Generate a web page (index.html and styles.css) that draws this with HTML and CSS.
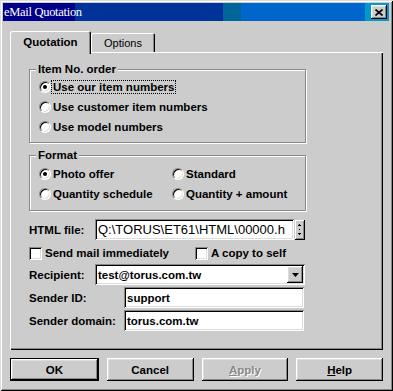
FILE: index.html
```html
<!DOCTYPE html>
<html lang="en">
<head>
  <meta charset="UTF-8" />
  <title>eMail Quotation</title>
  <link rel="stylesheet" href="styles.css">
</head>
<body>
  <div class="window">
    <div class="titlebar">
      <span class="title">eMail Quotation</span>
      <div class="close">
        <svg width="8" height="7" viewBox="0 0 8 7"><path d="M0.5 0.5 L7.5 6.5 M7.5 0.5 L0.5 6.5" stroke="#000" stroke-width="1.7" fill="none"/></svg>
      </div>
    </div>

    <div class="body">
      <div class="tabs">
        <div class="tab active">Quotation</div>
        <div class="tab">Options</div>
      </div>

      <div class="panel">
        <div class="group group-order">
          <div class="legend">Item No. order</div>
          <div class="opt"><span class="radio on"></span><span class="label focus">Use our item numbers</span></div>
          <div class="opt"><span class="radio"></span><span class="label">Use customer item numbers</span></div>
          <div class="opt"><span class="radio"></span><span class="label">Use model numbers</span></div>
        </div>

        <div class="group group-format">
          <div class="legend">Format</div>
          <div class="grid">
            <div class="opt"><span class="radio on"></span><span class="label">Photo offer</span></div>
            <div class="opt"><span class="radio"></span><span class="label">Standard</span></div>
            <div class="opt"><span class="radio"></span><span class="label">Quantity schedule</span></div>
            <div class="opt"><span class="radio"></span><span class="label">Quantity + amount</span></div>
          </div>
        </div>

        <div class="row row-file">
          <span class="caption">HTML file:</span>
          <div class="field file">Q:\TORUS\ET61\HTML\00000.h</div>
          <div class="spin">
            <svg width="6" height="20" viewBox="0 0 6 20" shape-rendering="crispEdges">
              <rect x="2" y="4" width="1" height="1"/><rect x="1" y="5" width="3" height="1"/>
              <rect x="2" y="9" width="1" height="1"/>
              <rect x="1" y="13" width="3" height="1"/><rect x="2" y="14" width="1" height="1"/>
            </svg>
          </div>
        </div>

        <div class="row row-checks">
          <div class="check-item first"><span class="check"></span>Send mail immediately</div>
          <div class="check-item"><span class="check"></span>A copy to self</div>
        </div>

        <div class="row row-combo">
          <span class="caption">Recipient:</span>
          <div class="field combo">
            <span class="combo-text">test@torus.com.tw</span>
            <span class="drop">
              <svg width="7" height="4" viewBox="0 0 7 4"><polygon points="0,0 7,0 3.5,4" fill="#000"/></svg>
            </span>
          </div>
        </div>

        <div class="row row-sender">
          <span class="caption wide">Sender ID:</span>
          <div class="field sender">support</div>
        </div>

        <div class="row row-sender">
          <span class="caption wide">Sender domain:</span>
          <div class="field sender">torus.com.tw</div>
        </div>
      </div>

      <div class="buttons">
        <div class="btn default">OK</div>
        <div class="btn">Cancel</div>
        <div class="btn disabled"><u>A</u>pply</div>
        <div class="btn"><u>H</u>elp</div>
      </div>
    </div>
  </div>
</body>
</html>
```

FILE: styles.css
```css
* {
  box-sizing: border-box;
}

body {
  margin: 0;
  background: #fff;
  font-family: "Liberation Sans", Arial, sans-serif;
  font-size: 11.5px;
  font-weight: bold;
  color: #000;
}

.window {
  width: 393px;
  height: 391px;
  display: flex;
  flex-direction: column;
  padding: 3px 4px 3px 3px;
  background: #cccccc;
  box-shadow: inset 1px 1px #dddddd, inset -1px -1px #000, inset 2px 2px #fff, inset -2px -2px #888;
}

.titlebar {
  height: 18px;
  display: flex;
  align-items: center;
  justify-content: space-between;
  padding: 0 2px 0 1px;
  background: linear-gradient(to right, #000088 0 18.7%, #003399 18.7% 57%, #006699 57% 61.7%, #0066cc 61.7% 93.8%, #0099cc 93.8%);
}

.title {
  font-family: "Liberation Serif", "Times New Roman", serif;
  font-weight: normal;
  font-size: 12.5px;
  letter-spacing: -0.3px;
  line-height: 18px;
  color: #fff;
}

.close {
  width: 16px;
  height: 14px;
  display: flex;
  align-items: center;
  justify-content: center;
  background: #cccccc;
  box-shadow: inset -1px -1px #000, inset 1px 1px #fff, inset -2px -2px #888, inset 2px 2px #dddddd;
}

.body {
  flex: 1;
  display: flex;
  flex-direction: column;
  padding: 10px 6px 7px 7px;
}

/* tabs */
.tabs {
  height: 21px;
  display: flex;
  align-items: flex-end;
}

.tab {
  position: relative;
  height: 19px;
  display: flex;
  align-items: center;
  justify-content: center;
  font-weight: normal;
  font-size: 11px;
  border-radius: 2px 2px 0 0;
  box-shadow: inset 1px 1px #fff, inset -1px 0 #000, inset -2px 0 #888;
}

.tab.active {
  z-index: 1;
  width: 81px;
  height: 23px;
  margin-bottom: -2px;
  padding-bottom: 2px;
  background: #cccccc;
  font-weight: bold;
  font-size: 11.5px;
}

.tab:not(.active) {
  width: 64px;
}

.panel {
  flex: 1;
  padding: 17px 0 0 19px;
  box-shadow: inset 1px 1px #fff, inset -1px -1px #000, inset -2px -2px #888;
}

/* group boxes */
.group {
  width: 277px;
  border: 1px solid #888;
  box-shadow: inset 1px 1px #fff, 1px 1px #fff;
  padding: 0 4px 5px 9px;
}

.legend {
  width: fit-content;
  margin: -8px 0 1px -3px;
  padding: 0 2px;
  line-height: 14px;
  background: #cccccc;
}

.group-format {
  margin-top: 12px;
  padding-bottom: 6px;
}

.group-format .legend {
  margin-bottom: 2px;
}

.grid {
  display: grid;
  grid-template-columns: 133px 1fr;
}

.opt {
  height: 20px;
  display: flex;
  align-items: center;
}

.radio {
  position: relative;
  width: 12px;
  height: 12px;
  flex: none;
  border-radius: 50%;
  background: #fff;
  border: 1px solid;
  border-color: #888 #fff #fff #888;
  box-shadow: inset 1px 1px #000, inset -1px -1px #dddddd;
}

.radio.on::after {
  content: "";
  position: absolute;
  left: 3px;
  top: 3px;
  width: 4px;
  height: 4px;
  border-radius: 50%;
  background: #000;
}

.label {
  padding: 0 1px;
  line-height: 12px;
  border: 1px dotted transparent;
}

.label.focus {
  border-color: #000;
}

/* form rows */
.row {
  display: flex;
  align-items: center;
}

.caption {
  width: 66px;
  flex: none;
}

.caption.wide {
  width: 95px;
}

.field {
  height: 21px;
  display: flex;
  align-items: center;
  padding: 0 3px;
  background: #fff;
  box-shadow: inset 1px 1px #888, inset -1px -1px #fff, inset 2px 2px #000, inset -2px -2px #dddddd;
  white-space: nowrap;
  overflow: hidden;
}

.row-file {
  margin-top: 8px;
}

.field.file {
  width: 199px;
  margin-right: 1px;
  font-weight: normal;
  font-size: 13px;
}

.spin {
  width: 10px;
  height: 20px;
  display: flex;
  justify-content: center;
  background: #cccccc;
  box-shadow: inset -1px -1px #000, inset 1px 1px #fff, inset -2px -2px #888;
}

.row-checks {
  height: 18px;
  margin-top: 4px;
}

.check-item {
  display: flex;
  align-items: center;
  gap: 3px;
}

.check-item.first {
  width: 166px;
}

.check {
  width: 13px;
  height: 13px;
  background: #fff;
  box-shadow: inset 1px 1px #888, inset -1px -1px #fff, inset 2px 2px #000, inset -2px -2px #dddddd;
}

.row-combo {
  margin-top: 2px;
}

.field.combo {
  width: 210px;
  padding-right: 2px;
  justify-content: space-between;
}

.drop {
  width: 16px;
  height: 17px;
  display: flex;
  align-items: center;
  justify-content: center;
  background: #cccccc;
  box-shadow: inset -1px -1px #000, inset 1px 1px #fff, inset -2px -2px #888, inset 2px 2px #dddddd;
}

.row-sender {
  margin-top: 2px;
}

.field.sender {
  width: 180px;
}

/* buttons */
.buttons {
  height: 23px;
  margin-top: 8px;
  display: flex;
  gap: 8px;
}

.btn {
  flex: 1;
  display: flex;
  align-items: center;
  justify-content: center;
  background: #cccccc;
  box-shadow: inset -1px -1px #000, inset 1px 1px #fff, inset -2px -2px #888, inset 2px 2px #dddddd;
}

.btn.default {
  border: 1px solid #000;
}

.btn.disabled {
  color: #888;
  text-shadow: 1px 1px #fff;
}
```
